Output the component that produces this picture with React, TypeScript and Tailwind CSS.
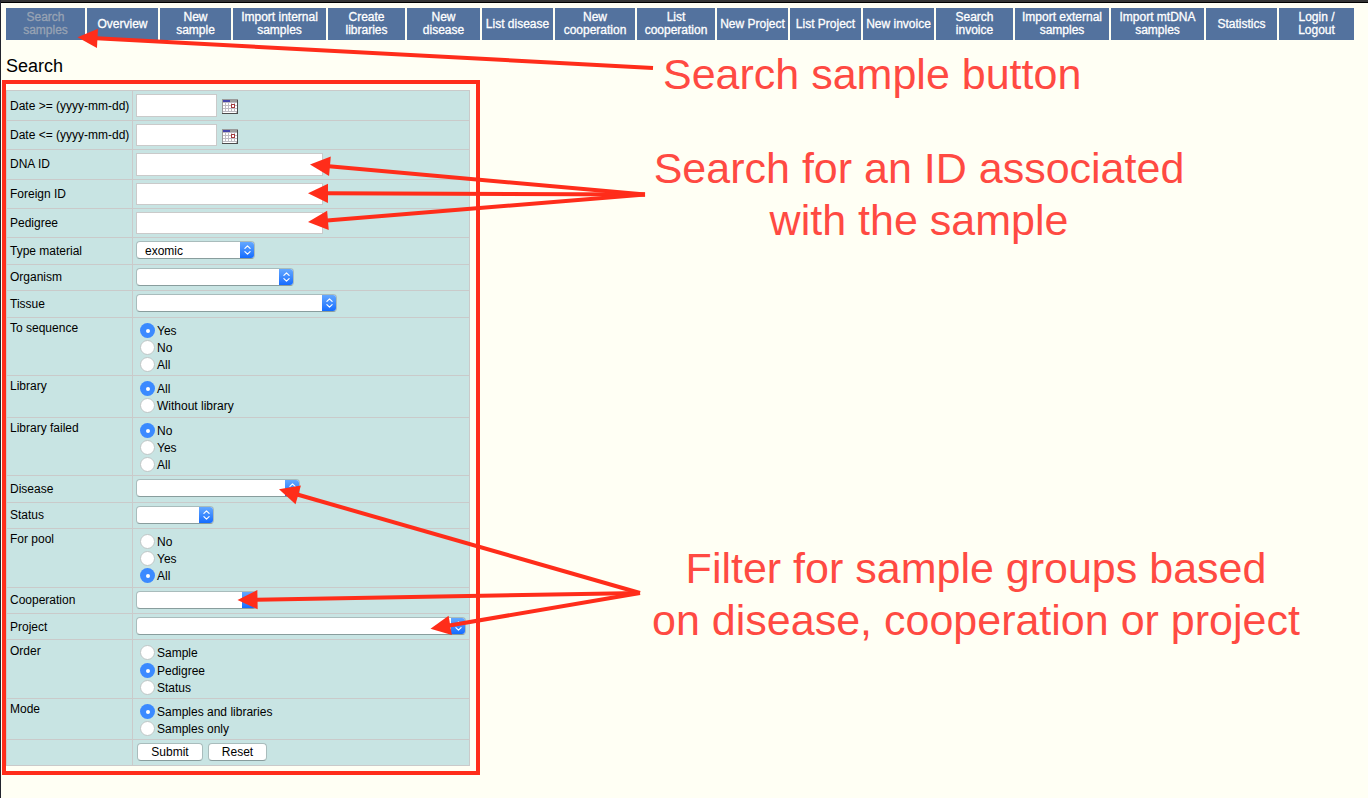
import type { ReactNode } from "react";

const NAV: { text: string[]; w: string; dim?: boolean }[] = [
  { text: ["Search", "samples"], w: "w-[79px]", dim: true },
  { text: ["Overview"], w: "w-[71px]" },
  { text: ["New", "sample"], w: "w-[71px]" },
  { text: ["Import internal", "samples"], w: "w-[93px]" },
  { text: ["Create", "libraries"], w: "w-[77px]" },
  { text: ["New", "disease"], w: "w-[73px]" },
  { text: ["List disease"], w: "w-[71px]" },
  { text: ["New", "cooperation"], w: "w-[80px]" },
  { text: ["List", "cooperation"], w: "w-[78px]" },
  { text: ["New Project"], w: "w-[71px]" },
  { text: ["List Project"], w: "w-[71px]" },
  { text: ["New invoice"], w: "w-[71px]" },
  { text: ["Search", "invoice"], w: "w-[77px]" },
  { text: ["Import external", "samples"], w: "w-[94px]" },
  { text: ["Import mtDNA", "samples"], w: "w-[93px]" },
  { text: ["Statistics"], w: "w-[71px]" },
  { text: ["Login /", "Logout"], w: "w-[75px]" },
];

type RowProps = { label: string; h: string; align?: string; children: ReactNode };

function Row({ label, h, align = "items-center", children }: RowProps) {
  return (
    <div className={`flex border-t border-[#cacaca] ${h}`}>
      <div className={`flex w-[126px] shrink-0 border-r border-[#cacaca] pl-[3px] leading-[14px] whitespace-nowrap ${align}`}>
        {label}
      </div>
      <div className="flex flex-1 items-start pt-[3px] pl-[3px]">{children}</div>
    </div>
  );
}

const TOP = "items-start pt-[3px]";
const RAISED = "items-center pb-[2px]";

function Field({ size }: { size: string }) {
  return <input className={`block rounded-none border border-[#cacaca] bg-white outline-none ${size}`} />;
}

function CalendarIcon() {
  return (
    <svg className="mt-[5px] ml-[5px]" width="16" height="15" shapeRendering="crispEdges">
      <rect width="16" height="15" fill="#bfbdc4" />
      <rect width="16" height="3" fill="#9b9b9b" />
      <rect x="1" y="1" width="7" height="2" fill="#4444ac" />
      {[1, 4, 7, 10, 13].map((x) => [4, 7, 10].map((y) => <rect key={`${x}-${y}`} x={x} y={y} width="2" height="2" fill="#fff" />))}
      <rect x="1" y="13" width="13" height="1" fill="#fff" />
      <rect x="9.5" y="5.5" width="3" height="3" fill="#fff" stroke="#a63a3e" />
      <path d="M15.5 1V15M0 14.5H16" stroke="#4c4c4c" />
      <path d="M0.5 0V14" stroke="#999" />
    </svg>
  );
}

function Select({ w, value }: { w: string; value?: string }) {
  return (
    <button className={`flex h-[18px] overflow-hidden rounded-[4px] border border-[#a9bcbc] border-b-[#899d9d] bg-white text-left ${w}`}>
      <span className="flex-1 pl-2 leading-[19px]">{value}</span>
      <span className="-my-px -mr-px flex h-[18px] w-[15px] items-center justify-center bg-linear-to-b from-[#68abff] to-[#0967ff]">
        <svg width="9" height="12" viewBox="0 0 9 12" fill="none" stroke="#fff" strokeWidth="1.2" strokeLinecap="round" strokeLinejoin="round">
          <path d="M1.9 4.4 4.5 1.9 7.1 4.4M1.9 7.6 4.5 10.1 7.1 7.6" />
        </svg>
      </span>
    </button>
  );
}

function Radios({ options, selected, loose }: { options: string[]; selected: number; loose?: boolean }) {
  return (
    <div className="flex flex-col pt-[1px] pl-1">
      {options.map((o, i) => (
        <label key={o} className={`flex items-start ${loose && i === 0 ? "h-[18px]" : "h-[17px]"}`}>
          {i === selected ? (
            <span className="mt-px flex size-[15px] items-center justify-center rounded-full bg-[#3b8aff]">
              <span className="size-[4px] rounded-full bg-white" />
            </span>
          ) : (
            <span className="mt-px size-[15px] rounded-full border-[1.5px] border-[#bfc6c6] bg-white" />
          )}
          <span className="pl-[2px] leading-[19px] whitespace-nowrap">{o}</span>
        </label>
      ))}
    </div>
  );
}

const ARROWS = [
  [653, 68, 77.5, 37.3],
  [645, 194.5, 310, 164.5],
  [645, 194.5, 308, 193.3],
  [645, 194.5, 308, 222],
  [640, 593, 279, 489.3],
  [640, 593, 237.5, 600],
  [640, 593, 430.5, 628.7],
];

function Arrow({ p }: { p: number[] }) {
  const [x1, y1, x2, y2] = p;
  const len = Math.hypot(x2 - x1, y2 - y1);
  const ux = (x2 - x1) / len;
  const uy = (y2 - y1) / len;
  const bx = x2 - ux * 20;
  const by = y2 - uy * 20;
  return (
    <g>
      <line x1={x1} y1={y1} x2={bx + ux} y2={by + uy} stroke="#ff2d1a" strokeWidth="4" />
      <polygon points={`${x2},${y2} ${bx - uy * 9.7},${by + ux * 9.7} ${bx + uy * 9.7},${by - ux * 9.7}`} fill="#ff2d1a" />
    </g>
  );
}

function Note({ place, children }: { place: string; children: ReactNode }) {
  return (
    <div className={`absolute text-[43px] leading-[52px] whitespace-nowrap text-[#ff4a42] ${place}`}>
      {children}
    </div>
  );
}

export default function App() {
  return (
    <div className="relative h-[798px] w-[1368px] overflow-hidden border-l border-[#22242e] bg-[#fffff4] font-['Liberation_Sans',Arial,sans-serif] text-[12px] text-black">
      <div className="h-[3px] border-b border-black bg-[#333]" />
      <nav className="mt-[5px] ml-[5px] flex gap-[2px]">
        {NAV.map((n) => (
          <button
            key={n.text.join(" ")}
            className={`flex h-8 shrink-0 flex-col items-center justify-center bg-[#53729e] leading-[13px] whitespace-nowrap ${n.w} ${n.dim ? "text-[#98a3b4] [-webkit-text-stroke:0.3px_#98a3b4]" : "text-white [-webkit-text-stroke:0.3px_white]"}`}
          >
            {n.text.map((t) => (
              <span key={t}>{t}</span>
            ))}
          </button>
        ))}
      </nav>
      <h1 className="mt-[15px] ml-[5px] h-[25px] text-[18px] leading-[22px]">Search</h1>
      <main className="ml-px h-[695px] w-[478px] border-4 border-[#ff2d1a] pt-[6px]">
        <div className="w-[464px] border-x border-b border-[#cacaca] bg-[#c8e4e3]">
          <Row label="Date >= (yyyy-mm-dd)" h="h-[30px]">
            <Field size="h-[23px] w-[81px]" />
            <CalendarIcon />
          </Row>
          <Row label="Date <= (yyyy-mm-dd)" h="h-[29px]">
            <Field size="h-[22px] w-[81px]" />
            <CalendarIcon />
          </Row>
          <Row label="DNA ID" h="h-[30px]" align={RAISED}><Field size="h-[23px] w-[187px]" /></Row>
          <Row label="Foreign ID" h="h-[29px]"><Field size="h-[22px] w-[187px]" /></Row>
          <Row label="Pedigree" h="h-[29px]"><Field size="h-[22px] w-[187px]" /></Row>
          <Row label="Type material" h="h-[27px]"><Select w="w-[119px]" value="exomic" /></Row>
          <Row label="Organism" h="h-[26px]" align={RAISED}><Select w="w-[158px]" /></Row>
          <Row label="Tissue" h="h-[27px]"><Select w="w-[201px]" /></Row>
          <Row label="To sequence" h="h-[58px]" align={TOP}><Radios options={["Yes", "No", "All"]} selected={0} /></Row>
          <Row label="Library" h="h-[42px]" align={TOP}><Radios options={["All", "Without library"]} selected={0} /></Row>
          <Row label="Library failed" h="h-[58px]" align={TOP}><Radios options={["No", "Yes", "All"]} selected={0} /></Row>
          <Row label="Disease" h="h-[27px]"><Select w="w-[164px]" /></Row>
          <Row label="Status" h="h-[26px]" align={RAISED}><Select w="w-[78px]" /></Row>
          <Row label="For pool" h="h-[59px]" align={TOP}><Radios options={["No", "Yes", "All"]} selected={2} /></Row>
          <Row label="Cooperation" h="h-[26px]" align={RAISED}><Select w="w-[121px]" /></Row>
          <Row label="Project" h="h-[26px]"><Select w="w-[330px]" /></Row>
          <Row label="Order" h="h-[59px]" align="items-start pt-[4px]"><Radios options={["Sample", "Pedigree", "Status"]} selected={1} loose /></Row>
          <Row label="Mode" h="h-[41px]" align={TOP}><Radios options={["Samples and libraries", "Samples only"]} selected={0} /></Row>
          <Row label="" h="h-[26px]">
            <button className="ml-px h-[18px] w-[66px] rounded-[4px] border border-[#a9bcbc] border-b-[#899d9d] bg-white leading-[16px]">Submit</button>
            <button className="ml-[5px] h-[18px] w-[59px] rounded-[4px] border border-[#a9bcbc] border-b-[#899d9d] bg-white leading-[16px]">Reset</button>
          </Row>
        </div>
      </main>
      <svg className="pointer-events-none absolute top-0 -left-px" width="1368" height="798">
        {ARROWS.map((p) => (
          <Arrow key={p.join()} p={p} />
        ))}
      </svg>
      <Note place="top-[48px] left-[662px]">Search sample button</Note>
      <Note place="top-[142px] left-[618px] w-[600px] text-center">
        Search for an ID associated
        <br />
        with the sample
      </Note>
      <Note place="top-[542px] left-[625px] w-[700px] text-center">
        Filter for sample groups based
        <br />
        on disease, cooperation or project
      </Note>
    </div>
  );
}
